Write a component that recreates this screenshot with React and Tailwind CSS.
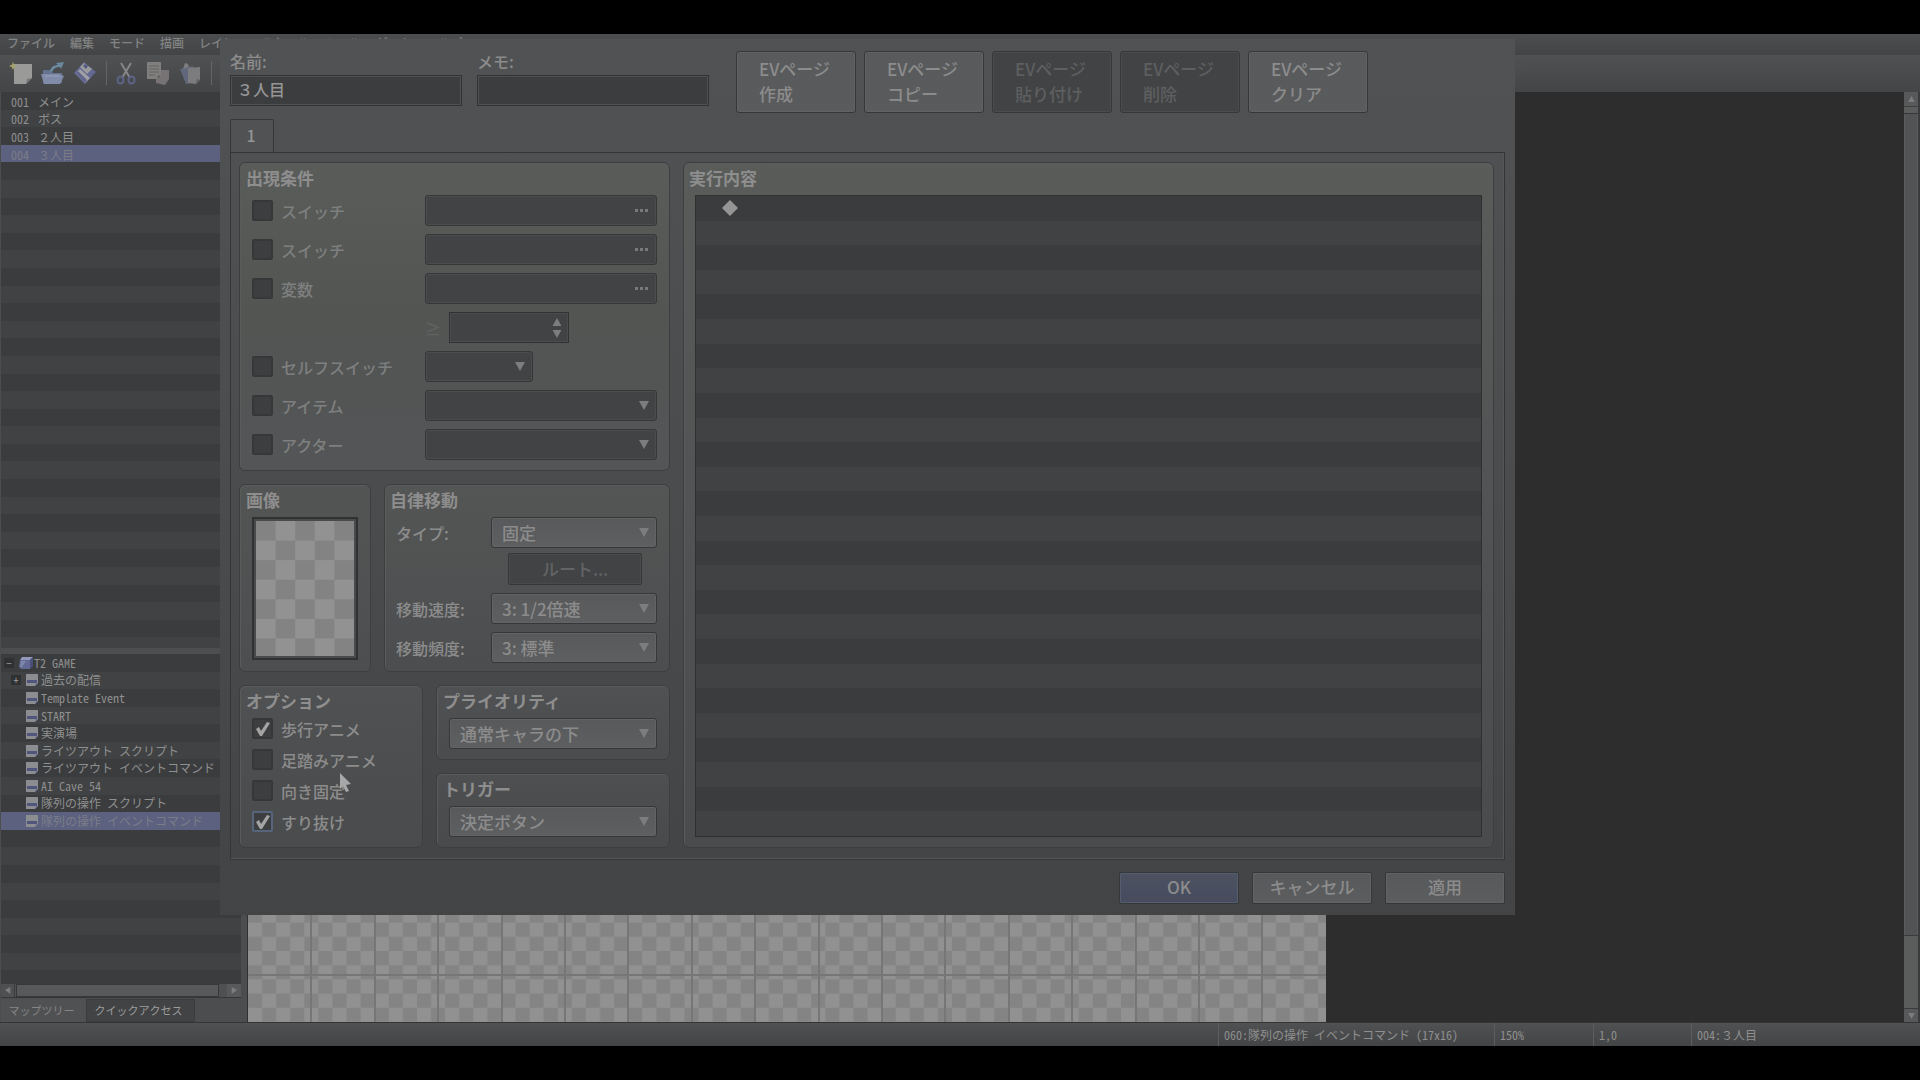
import { useState } from 'react';
import { clsx } from 'clsx';
import { twMerge } from 'tailwind-merge';

const MENUS = ['ファイル', '編集', 'モード', '描画', 'レイヤー', 'スケール', 'ツール', 'ゲーム', 'ヘルプ'];

const EVENTS = [
  { id: '001', name: 'メイン' },
  { id: '002', name: 'ボス' },
  { id: '003', name: '２人目' },
  { id: '004', name: '３人目' },
];

const MAPS = [
  '過去の配信',
  'Template Event',
  'START',
  '実演場',
  'ライツアウト スクリプト',
  'ライツアウト イベントコマンド',
  'AI Cave 54',
  '隊列の操作 スクリプト',
  '隊列の操作 イベントコマンド',
];

const PAGE_BUTTONS = [
  { label: '作成' },
  { label: 'コピー' },
  { label: '貼り付け', disabled: true },
  { label: '削除', disabled: true },
  { label: 'クリア' },
];

const EVENT_ROWS = 32;
const TREE_ROWS = 19;
const COMMAND_ROWS = 26;

const stripe = (i) => (i % 2 === 0 ? 'bg-[#3b3c3e]' : 'bg-[#404243]');

/* ---------- icons ---------- */

function NewIcon() {
  return (
    <svg width="24" height="24" viewBox="0 0 24 24" aria-hidden="true">
      <path d="M5 3h18v14l-6 6H5z" fill="#9a9a98" />
      <path d="M17 23l1-5 5-1z" fill="#737577" />
      <path d="M4 1l1.2 2.8L8 5 5.2 6.2 4 9 2.8 6.2 0 5l2.8-1.2z" fill="#a3a268" />
    </svg>
  );
}

function OpenIcon() {
  return (
    <svg width="24" height="24" viewBox="0 0 24 24" aria-hidden="true">
      <path d="M2 9h8l2 3h9v10H2z" fill="#66738f" />
      <path d="M0 13h18l5 2-4 8H3z" fill="#7f8ba8" />
      <path d="M4 15h15" stroke="#98a2b8" />
      <path d="M9 10c1-4 4-6 8-6l-2-2 8-1-3 7-1-2c-4 0-6 1-8 5z" fill="#6a8aa0" />
    </svg>
  );
}

function SaveIcon() {
  return (
    <svg width="24" height="24" viewBox="0 0 24 24" aria-hidden="true">
      <path d="M1 12L11 1l12 10-11 12z" fill="#626892" />
      <path d="M7 6l4-4 8 6-5 5z" fill="#9a9b9d" />
      <path d="M10 5l2-2 3 2-2 3z" fill="#555a80" />
      <path d="M3 12l4-4 10 9-5 5z" fill="#a09fa2" />
      <path d="M3 12l2-2 9 9-2 3z" fill="#62658c" />
    </svg>
  );
}

function CutIcon() {
  return (
    <svg width="24" height="24" viewBox="0 0 24 24" fill="none" aria-hidden="true">
      <path d="M7 2l9 15M17 2L8 17" stroke="#858789" strokeWidth="2" />
      <ellipse cx="6.5" cy="19" rx="3" ry="3.5" stroke="#5d6487" strokeWidth="2" />
      <ellipse cx="17.5" cy="19" rx="3" ry="3.5" stroke="#5d6487" strokeWidth="2" />
    </svg>
  );
}

function CopyIcon() {
  return (
    <svg width="24" height="24" viewBox="0 0 24 24" aria-hidden="true">
      <path d="M10 9h13v9l-4 6-9-2z" fill="#777374" />
      <path d="M1 1h14v14l-4 3H1z" fill="#807f7d" />
      <path d="M3 5h10M3 8h10M3 11h10M3 14h6" stroke="#666563" />
      <path d="M11 18l1-4 3 1z" fill="#5f5f5f" />
    </svg>
  );
}

function PasteIcon() {
  return (
    <svg width="24" height="24" viewBox="0 0 24 24" aria-hidden="true">
      <path d="M2 8l13-3 5 15-12 3z" fill="#62687c" />
      <path d="M6 5l1-3 3 1 1 3-6 2z" fill="#7c7d80" />
      <path d="M10 7l12-1v13l-4 4-8-1z" fill="#7c7c7e" />
      <path d="M18 23l1-5 3 1z" fill="#5f6062" />
    </svg>
  );
}

function ProjectIcon() {
  return (
    <svg width="14" height="14" viewBox="0 0 14 14" className="shrink-0" aria-hidden="true">
      <path d="M3 1h11l-3 3H1z" fill="#9298bb" />
      <path d="M1 4h10v9H2L0 11z" fill="#626994" />
      <path d="M11 4l3-3v9l-3 3z" fill="#4c5078" />
      <path d="M2 5h5l-4 6H1z" fill="#7f87aa" />
    </svg>
  );
}

function MapIcon() {
  return (
    <svg width="12" height="14" viewBox="0 0 12 14" className="shrink-0" aria-hidden="true">
      <path d="M0 1h12v9l-3 3H0z" fill="#8b8d90" />
      <path d="M1 7h10v3H1z" fill="#4f557c" />
      <path d="M9 13l1-3h2z" fill="#6d7094" />
    </svg>
  );
}

function Triangle({ dir = 'down', className = '' }) {
  return (
    <svg width="10" height="9" viewBox="0 0 10 9" className={className} aria-hidden="true">
      <path
        d={{ down: 'M0 0h10L5 9z', up: 'M0 9h10L5 0z', left: 'M8 0v9L1 4z', right: 'M2 0v9l7-5z' }[dir]}
        fill="currentColor"
      />
    </svg>
  );
}

/* ---------- form controls ---------- */

function Group({ title, className = '', children }) {
  return (
    <section
      className={twMerge(
        'flex flex-col rounded-md border border-[#3c3e3f] px-3 pt-px pb-2.5 shadow-[inset_1px_1px_0_#5a5c5c]',
        className,
      )}
    >
      <h2 className="mb-[3px] -ml-[6px] h-7 text-[17px] leading-7 font-bold text-[#8e8e8e]">{title}</h2>
      {children}
    </section>
  );
}

function CheckBox({ label, checked, focused }) {
  const [on, setOn] = useState(!!checked);
  return (
    <label className={clsx('flex items-center gap-2 text-base leading-5', checked === undefined ? 'text-[#7e7f7f]' : 'text-[#8c8c8c]')}>
      <span className="grid size-[21px] place-items-center">
        <input
          type="checkbox"
          checked={on}
          onChange={() => setOn(!on)}
          className={clsx(
            'col-start-1 row-start-1 size-[21px] appearance-none rounded-xs border-2 bg-[#3c3e3f]',
            focused ? 'border-[#56647c]' : 'border-[#353738]',
          )}
        />
        {on && (
          <svg width="15" height="15" viewBox="0 0 15 15" className="pointer-events-none col-start-1 row-start-1" aria-hidden="true">
            <path d="M1 8l3-2 2 4 6-9 3 1-8 13H5z" fill="#a4a4a4" />
          </svg>
        )}
      </span>
      {label}
    </label>
  );
}

function Select({ label, value = '', dim, className = '' }) {
  return (
    <span className={clsx('grid h-[31px] items-center', className)}>
      <select
        aria-label={label}
        className={clsx(
          'col-start-1 row-start-1 h-full w-full appearance-none rounded-[3px] border border-[#353738] px-2.5 text-[17px] leading-7 text-[#8c8c8c]',
          dim
            ? 'bg-[#424345] shadow-[inset_0_0_0_1px_#4a4c4d]'
            : 'bg-linear-to-b from-[#58595b] to-[#5e5f61] shadow-[inset_0_0_0_1px_#626365]',
        )}
      >
        <option>{value}</option>
      </select>
      <Triangle className="pointer-events-none col-start-1 row-start-1 mr-2 justify-self-end text-[#7c7d7e]" />
    </span>
  );
}

function PickerField({ label }) {
  return (
    <button
      type="button"
      aria-label={label}
      className="flex h-[31px] items-center justify-end gap-0.5 rounded-[3px] border border-[#353738] bg-[#424345] px-2 shadow-[inset_0_0_0_1px_#4a4c4d]"
    >
      <i className="size-[3px] bg-[#77797a]" />
      <i className="size-[3px] bg-[#77797a]" />
      <i className="size-[3px] bg-[#77797a]" />
    </button>
  );
}

function TextField({ id, label, value }) {
  return (
    <div className="w-[232px]">
      <label htmlFor={id} className="block text-base leading-7 text-[#8c8c8c]">{label}</label>
      <input
        id={id}
        defaultValue={value}
        className="block h-[31px] w-full border border-[#303233] bg-[#3c3d3f] px-1.5 pb-1 text-base text-[#959595] shadow-[inset_0_0_0_1px_#4f5152] outline-none"
      />
    </div>
  );
}

function DialogButton({ children, primary }) {
  return (
    <button
      type="button"
      className={clsx(
        'h-8 w-[120px] rounded-xs border border-[#353738] pb-0.5 text-[17px] leading-7 text-[#8c8c8c]',
        primary
          ? 'bg-linear-to-b from-[#4c5260] to-[#464c5e] shadow-[inset_0_0_0_1px_#555d70]'
          : 'bg-linear-to-b from-[#58595b] to-[#5c5d5f] shadow-[inset_0_0_0_1px_#626365]',
      )}
    >
      {children}
    </button>
  );
}

/* ---------- dialog panels ---------- */

function Conditions() {
  return (
    <Group title="出現条件" className="bg-linear-to-b from-[#5a5c5a] via-[#535553] to-[#535557]">
      <div className="grid auto-rows-[31px] grid-cols-[173px_1fr] items-center gap-y-2">
        <CheckBox label="スイッチ" />
        <PickerField label="スイッチ 1" />
        <CheckBox label="スイッチ" />
        <PickerField label="スイッチ 2" />
        <CheckBox label="変数" />
        <PickerField label="変数" />
        <span />
        <div className="flex items-center">
          <span className="w-6 text-base leading-5 text-[#616363]">≥</span>
          <div className="flex h-[31px] w-[120px] items-center border border-[#303233] bg-[#424345] pr-1.5 shadow-[inset_0_0_0_1px_#4a4c4d]">
            <input aria-label="変数の値" className="w-full min-w-0 bg-transparent px-2 text-base outline-none" />
            <div className="flex flex-col gap-1 text-[#7c7d7e]">
              <button type="button" aria-label="増やす"><Triangle dir="up" className="h-2" /></button>
              <button type="button" aria-label="減らす"><Triangle className="h-2" /></button>
            </div>
          </div>
        </div>
        <CheckBox label="セルフスイッチ" />
        <Select label="セルフスイッチ" dim className="w-[108px]" />
        <CheckBox label="アイテム" />
        <Select label="アイテム" dim />
        <CheckBox label="アクター" />
        <Select label="アクター" dim />
      </div>
    </Group>
  );
}

function CharacterImage() {
  return (
    <Group title="画像" className="w-[132px] bg-linear-to-b from-[#535554] to-[#4d4e50]">
      <button
        type="button"
        aria-label="画像"
        className="h-[143px] w-[106px] border-2 border-[#303132] bg-[#484a4b] p-0.5"
      >
        <svg width="98" height="135" viewBox="0 0 100 138" preserveAspectRatio="none" className="block" aria-hidden="true">
          <defs>
            <pattern id="cell" width="40" height="40" patternUnits="userSpaceOnUse">
              <path d="M0 0h40v40H0z" fill="#929292" />
              <path d="M0 0h20v20H0zM20 20h20v20H20z" fill="#838383" />
            </pattern>
          </defs>
          <rect width="100" height="138" fill="url(#cell)" />
        </svg>
      </button>
    </Group>
  );
}

function Movement() {
  return (
    <Group title="自律移動" className="flex-1 bg-linear-to-b from-[#545655] to-[#4c4d4f] pb-2 pl-[11px]">
      <div className="grid grid-cols-[95px_1fr] items-center gap-y-2 text-base leading-5 text-[#8c8c8c]">
        <span>タイプ:</span>
        <Select label="タイプ" value="固定" />
        <span />
        <button
          type="button"
          disabled
          className="-mt-[3px] mr-[15px] ml-[17px] h-8 rounded-xs border border-[#353738] bg-[#424345] text-[17px] leading-7 text-[#626465] shadow-[inset_0_0_0_1px_#484a4b]"
        >
          ルート...
        </button>
        <span>移動速度:</span>
        <Select label="移動速度" value="3: 1/2倍速" />
        <span>移動頻度:</span>
        <Select label="移動頻度" value="3: 標準" />
      </div>
    </Group>
  );
}

function Options() {
  return (
    <Group title="オプション" className="w-[184px] bg-linear-to-b from-[#505153] to-[#4a4b4c]">
      <div className="flex flex-col gap-2.5">
        <CheckBox label="歩行アニメ" checked />
        <CheckBox label="足踏みアニメ" checked={false} />
        <CheckBox label="向き固定" checked={false} />
        <CheckBox label="すり抜け" checked focused />
      </div>
    </Group>
  );
}

function Commands() {
  return (
    <Group title="実行内容" className="flex-1 bg-linear-to-b from-[#5a5c5a] via-[#515354] to-[#4a4b4c] pr-[11px] pl-[11px]">
      <ul className="grid flex-1 auto-rows-fr border border-[#2f3031]">
        {Array.from({ length: COMMAND_ROWS }, (_, i) => (
          <li key={i} className={clsx('flex items-center pl-[26px]', stripe(i))}>
            {i === 0 && (
              <svg width="16" height="16" viewBox="0 0 16 16" aria-hidden="true">
                <path d="M8 0l8 8-8 8-8-8z" fill="#959595" />
              </svg>
            )}
          </li>
        ))}
      </ul>
    </Group>
  );
}

function EventDialog() {
  return (
    <div
      role="dialog"
      aria-label="イベントの編集"
      className="absolute top-[5px] left-[220px] flex h-[876px] w-[1295px] flex-col bg-linear-to-b from-[#515254] via-[#4b4c4e] to-[#434446] px-2.5 pb-[11px] font-medium"
    >
      <div className="flex">
        <div className="flex gap-[15px] pt-2">
          <TextField id="name" label="名前:" value="３人目" />
          <TextField id="memo" label="メモ:" value="" />
        </div>
        <div className="ml-[27px] flex gap-2 pt-3">
          {PAGE_BUTTONS.map((b) => (
            <button
              key={b.label}
              type="button"
              disabled={b.disabled}
              className={clsx(
                'flex h-[62px] w-[120px] items-center justify-center rounded-[3px] border border-[#353738] pb-0.5 text-left text-[17px] leading-[25px]',
                b.disabled
                  ? 'bg-[#424345] text-[#5d5f60] shadow-[inset_0_0_0_1px_#4a4c4d]'
                  : 'bg-linear-to-b from-[#585a5b] to-[#5a5b5d] text-[#8c8c8c] shadow-[inset_0_0_0_1px_#606263]',
              )}
            >
              <span className="w-[74px] whitespace-nowrap">
                EVページ
                <br />
                {b.label}
              </span>
            </button>
          ))}
        </div>
      </div>

      <div role="tablist" className="mt-1.5 flex">
        <button
          type="button"
          role="tab"
          aria-selected="true"
          className="-mb-px h-[34px] w-[44px] rounded-t-xs border border-b-0 border-[#353738] bg-[#505254] pr-0.5 pb-1 text-base text-[#959595]"
        >
          1
        </button>
      </div>

      <div className="flex flex-1 gap-[13px] border border-[#333536] py-[9px] pr-2.5 pb-[11px] pl-2 shadow-[inset_-1px_-1px_0_#545657]">
        <div className="flex w-[431px] flex-col gap-[13px]">
          <Conditions />
          <div className="flex gap-[13px]">
            <CharacterImage />
            <Movement />
          </div>
          <div className="flex flex-1 gap-[13px]">
            <Options />
            <div className="flex flex-1 flex-col gap-[13px]">
              <Group title="プライオリティ" className="flex-1 bg-linear-to-b from-[#505153] to-[#4b4c4d] pb-[9px]">
                <Select label="プライオリティ" value="通常キャラの下" />
              </Group>
              <Group title="トリガー" className="flex-1 bg-linear-to-b from-[#4e4f50] to-[#494a4b] pb-[9px]">
                <Select label="トリガー" value="決定ボタン" />
              </Group>
            </div>
          </div>
        </div>
        <Commands />
      </div>

      <div className="mt-3 flex justify-end gap-[13px]">
        <DialogButton primary>OK</DialogButton>
        <DialogButton>キャンセル</DialogButton>
        <DialogButton>適用</DialogButton>
      </div>
    </div>
  );
}

/* ---------- main window ---------- */

function EventList() {
  return (
    <div className="h-[556px] overflow-hidden">
      <ul className="grid h-[563px] auto-rows-fr">
        {Array.from({ length: EVENT_ROWS }, (_, i) => {
          const ev = EVENTS[i];
          const selected = i === 3;
          return (
            <li
              key={i}
              className={clsx(
                'flex items-center gap-[9px] pt-0.5 pl-2.5 leading-4',
                selected ? 'bg-[#5c617f] text-[#7a7d88]' : ['text-[#8f8f8f]', stripe(i)],
              )}
            >
              {ev && <><span>{ev.id}</span><span>{ev.name}</span></>}
            </li>
          );
        })}
      </ul>
    </div>
  );
}

function Expander({ sign }) {
  return (
    <button type="button" className="flex size-2.5 items-center justify-center bg-[#303132] text-[10px] leading-none text-[#a0a0a0]">
      {sign}
    </button>
  );
}

function MapTree() {
  return (
    <div className="h-[330px] overflow-hidden">
      <ul className="grid h-[334px] auto-rows-fr whitespace-nowrap">
        <li className="flex items-center gap-[5px] bg-[#3b3c3e] pl-[3px] leading-4 text-[#8f8f8f]">
          <Expander sign="−" />
          <span className="flex items-center gap-px"><ProjectIcon />T2 GAME</span>
        </li>
        {Array.from({ length: TREE_ROWS - 1 }, (_, i) => {
          const name = MAPS[i];
          return (
            <li
              key={i}
              className={clsx(
                'flex items-center gap-[5px] pl-2.5 leading-4',
                i === 8 ? 'bg-[#5c617f] text-[#7a7d88]' : ['text-[#8f8f8f]', stripe(i + 1)],
              )}
            >
              {i === 0 ? <Expander sign="+" /> : <span className="w-2.5" />}
              {name && <span className="flex items-center gap-[3px]"><MapIcon />{name}</span>}
            </li>
          );
        })}
      </ul>
    </div>
  );
}

function Sidebar() {
  return (
    <aside className="flex w-[247px] flex-col pr-[6px] pl-px">
      <EventList />
      <div className="h-[6px] bg-[#4d4e50]" />
      <MapTree />
      <div className="flex h-[14px] border-b border-[#353738] bg-[#4e5051] text-[#7b7c7d]">
        <button type="button" aria-label="左へ" className="flex w-[14px] items-center justify-center border-r border-[#3b3c3e]">
          <Triangle dir="left" className="h-[7px] w-2" />
        </button>
        <div className="ml-px flex-1 pr-2">
          <div className="h-full border border-[#353738] bg-[#58595b]" />
        </div>
        <button type="button" aria-label="右へ" className="flex w-[14px] items-center justify-center bg-[#58595b]">
          <Triangle dir="right" className="h-[7px] w-2" />
        </button>
      </div>
      <div role="tablist" className="flex flex-1 text-[11px] leading-4 text-[#8f8f8f]">
        <button type="button" role="tab" aria-selected="true" className="mt-px w-[85px] bg-[#505153] pr-1 pb-0.5 text-[#868686]">マップツリー</button>
        <button type="button" role="tab" className="mt-px w-[109px] border border-[#3a3c3d] bg-[#424345] pr-1 pb-0.5 text-[#9c9c9c]">クイックアクセス</button>
      </div>
    </aside>
  );
}

function MapCanvas() {
  const lines = Array.from({ length: 16 }, (_, i) => Math.round((i + 1) * 63.4) - 1);
  return (
    <main className="flex-1 overflow-hidden border-l border-[#2f3031] bg-[#2d2d2d]">
      <svg width="1078" height="930" className="block" aria-label="マップ">
        <defs>
          {/* the checker runs on under the grid, it does not restart in each tile */}
          <pattern id="ground" width="28.16" height="28.4" y="7" patternUnits="userSpaceOnUse">
            <path d="M0 0h29v29H0z" fill="#919191" />
            <path d="M14.08 0h14.08v14.2H14.08zM0 14.2h14.08v14.2H0z" fill="#848484" />
          </pattern>
        </defs>
        <rect width="1078" height="930" fill="url(#ground)" />
        {lines.map((x) => <rect key={x} x={x} y="0" width="2" height="930" fill="#767676" />)}
        <rect y="882" width="1078" height="2" fill="#767676" />
      </svg>
    </main>
  );
}

function VerticalScroll() {
  return (
    <div className="flex w-[16px] flex-col border-r-2 border-[#3a3b3c] bg-[#58595b] text-[#7b7c7d]">
      <button type="button" aria-label="上へ" className="flex h-[15px] items-center justify-center border-b border-[#3f4041]">
        <Triangle dir="up" className="h-[6px] w-[7px]" />
      </button>
      <div className="h-[7px] border-b border-[#353738] bg-[#5b5d5c]" />
      <div className="flex-1 border-x border-[#5c5d5e] bg-[#525355]" />
      <div className="h-[74px] border-y border-[#3a3b3c] bg-[#5b5d5c]" />
      <button type="button" aria-label="下へ" className="flex h-[13px] items-center justify-center">
        <Triangle className="h-[6px] w-[7px]" />
      </button>
    </div>
  );
}

const TOOL_GROUPS = [
  [['新規', NewIcon], ['開く', OpenIcon], ['保存', SaveIcon]],
  [['切り取り', CutIcon], ['コピー', CopyIcon], ['貼り付け', PasteIcon]],
];

export default function App() {
  return (
    <div className="h-screen bg-black py-[34px] font-['Noto_Sans_CJK_JP',sans-serif] text-xs font-medium">
      <div className="relative flex h-full flex-col overflow-hidden bg-[#4c4d4f]">
        <nav className="flex h-[21px] gap-[15px] bg-linear-to-b from-[#4c4d4f] to-[#434445] pb-[3px] pl-[7px] leading-[18px] text-[#828383]">
          {MENUS.map((m) => <button key={m} type="button">{m}</button>)}
        </nav>
        <div className="flex h-[37px] items-center bg-linear-to-b from-[#505153] to-[#434546] pb-0.5 pl-[9px]">
          {TOOL_GROUPS.map((tools, i) => (
            <div key={i} className="mr-[7px] flex gap-2 border-r border-[#636465] pr-[9px]">
              {tools.map(([label, Icon]) => (
                <button key={label} type="button" aria-label={label}><Icon /></button>
              ))}
            </div>
          ))}
        </div>

        <div className="flex min-h-0 flex-1 font-['Noto_Sans_Mono_CJK_JP','Noto_Sans_CJK_JP',monospace]">
          <Sidebar />
          <MapCanvas />
          <VerticalScroll />
        </div>

        <footer className="flex h-6 justify-end border-t border-[#343536] bg-linear-to-b from-[#505153] to-[#434445] font-['Noto_Sans_Mono_CJK_JP','Noto_Sans_CJK_JP',monospace] leading-6 text-[#8f8f8f]">
          <span className="w-[276px] border-l border-[#5c5d5e] pl-[5px]">060:隊列の操作 イベントコマンド (17x16)</span>
          <span className="w-[99px] border-l border-[#5c5d5e] pl-[5px]">150%</span>
          <span className="w-[98px] border-l border-[#5c5d5e] pl-[5px]">1,0</span>
          <span className="w-[229px] border-l border-[#5c5d5e] pl-[5px]">004:３人目</span>
        </footer>

        <EventDialog />

        <svg width="12" height="19" viewBox="0 0 12 19" className="pointer-events-none absolute top-[739px] left-[340px]" aria-hidden="true">
          <path d="M0 0l11 11-5 1 3 6-3 1-3-6-3 3z" fill="#a8a8a8" />
        </svg>
      </div>
    </div>
  );
}
